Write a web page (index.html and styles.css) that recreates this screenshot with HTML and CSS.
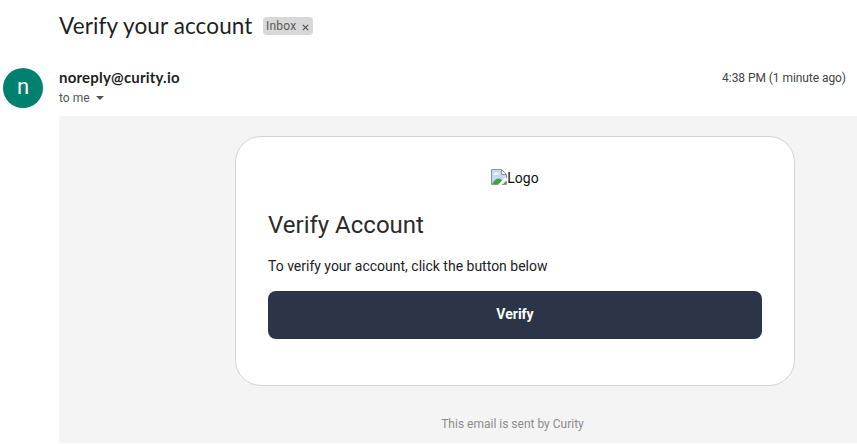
FILE: index.html
```html
<!DOCTYPE html>
<html lang="en">
<head>
<meta charset="utf-8">
<title>Verify your account</title>
<link rel="stylesheet" href="styles.css">
</head>
<body>
<header class="subject">
  <h1><span>Verify your account</span></h1>
  <div class="label"><span>Inbox</span>
    <svg width="7" height="7" viewBox="0 0 7 7"><path d="M.8.8l5.4 5.4M6.2.8L.8 6.2" stroke="#555" stroke-width="1.2" fill="none"/></svg>
  </div>
</header>
<section class="sender">
  <div class="avatar">n</div>
  <div class="who">
    <div class="from"><span>noreply@curity.io</span></div>
    <div class="to"><span>to me</span><svg width="8" height="4" viewBox="0 0 8 4"><path d="M0 0h8L4 4z" fill="#555"/></svg></div>
  </div>
  <time>4:38 PM (1 minute ago)</time>
</section>
<main class="mail">
  <article class="card">
    <div class="logo">
      <svg width="16" height="16" viewBox="0 0 16 16">
        <path d="M.5.5h10l5 5v10H.5z" fill="#c3d9f7"/>
        <path d="M2.5 5.5c0-1.3 1.3-1.5 1.700-1.200C4.800 2.700 7 3 7.100 4.300 8.200 4.300 8.300 5.500 8 5.700H2.700z" fill="#fff"/>
        <path d="M1 15c1.500-3 4-5.500 6.500-5.500 1.600 0 2.800.8 3.700 2L8 15z" fill="#3fa535"/>
        <path d="M12.500 15c1-1.600 1.800-2.300 2.500-2.500V15z" fill="#3fa535"/>
        <path d="M16 6.500v4L10.500 16H7z" fill="#fff"/>
        <path d="M10.500.5v5h5z" fill="#fff"/>
        <path d="M7.500 15.500H.5V.5h10l5 5v4M10.500.5v5h5M15.500 12v3.500H11" fill="none" stroke="#929292"/>
      </svg><span>Logo</span>
    </div>
    <h2>Verify Account</h2>
    <p>To verify your account, click the button below</p>
    <a class="button">Verify</a>
  </article>
  <footer>This email is sent by Curity</footer>
</main>
</body>
</html>
```
FILE: styles.css
```css
* { box-sizing: border-box; }
body {
  margin: 0;
  height: 444px;
  overflow: hidden;
  background: #fff;
  color: #222;
  font-family: Roboto, "Liberation Sans", sans-serif;
  display: flex;
  flex-direction: column;
}
.subject {
  height: 52px;
  padding-left: 59px;
  display: flex;
  align-items: center;
  gap: 11px;
}
h1 {
  margin: 0;
  width: 193px;
  white-space: nowrap;
  font: 400 22.5px/28px Lato, sans-serif;
  letter-spacing: .12px;
  color: #1f1f1f;
}
.label {
  width: 50px;
  height: 18px;
  padding: 0 4px 0 3px;
  border-radius: 4px;
  background: #d8d8d8;
  color: #5a5a5a;
  font-size: 12px;
  letter-spacing: .2px;
  line-height: 18px;
  display: flex;
  align-items: center;
  justify-content: space-between;
}
.label svg { margin-top: 2px; }
.sender {
  height: 64px;
  padding: 16px 11px 0 3px;
  display: flex;
}
.avatar {
  width: 40px;
  height: 40px;
  border-radius: 50%;
  background: #00806f;
  color: #fff;
  font-size: 22px;
  line-height: 38px;
  text-align: center;
}
.who { flex: 1; margin-left: 16px; }
.from {
  padding-bottom: 2px;
  font: 700 15px/18px Lato, sans-serif;
  letter-spacing: .2px;
  color: #1f1f1f;
}
.to {
  display: flex;
  align-items: center;
  gap: 6px;
  color: #555;
  font-size: 12px;
  line-height: 20px;
}
time {
  color: #444;
  font-size: 12px;
  line-height: 20px;
  letter-spacing: -.06px;
}
.mail {
  height: 327px;
  margin-left: 59px;
  padding: 20px 62px 0 176px;
  background: #f4f4f4;
}
.card {
  height: 250px;
  padding: 32px;
  background: #fff;
  border: 1px solid #d4d4d4;
  border-radius: 26px;
}
.logo {
  height: 18px;
  display: flex;
  align-items: center;
  justify-content: center;
  color: #111;
  font-size: 14px;
  line-height: 18px;
}
.logo svg { margin-top: -2px; }
h2 {
  margin: 22px 0 0;
  color: #2c2c2c;
  font-size: 24px;
  line-height: 32px;
  font-weight: 400;
}
p {
  margin: 14px 0 0;
  font-size: 14px;
  line-height: 22px;
}
.button {
  display: block;
  height: 48px;
  margin-top: 14px;
  border-radius: 8px;
  background: #2b3547;
  color: #fff;
  font-size: 14px;
  line-height: 47px;
  font-weight: 700;
  text-align: center;
}
footer {
  margin-top: 28px;
  padding-right: 5px;
  color: #8c8c8c;
  font-size: 12px;
  line-height: 20px;
  text-align: center;
}
```
